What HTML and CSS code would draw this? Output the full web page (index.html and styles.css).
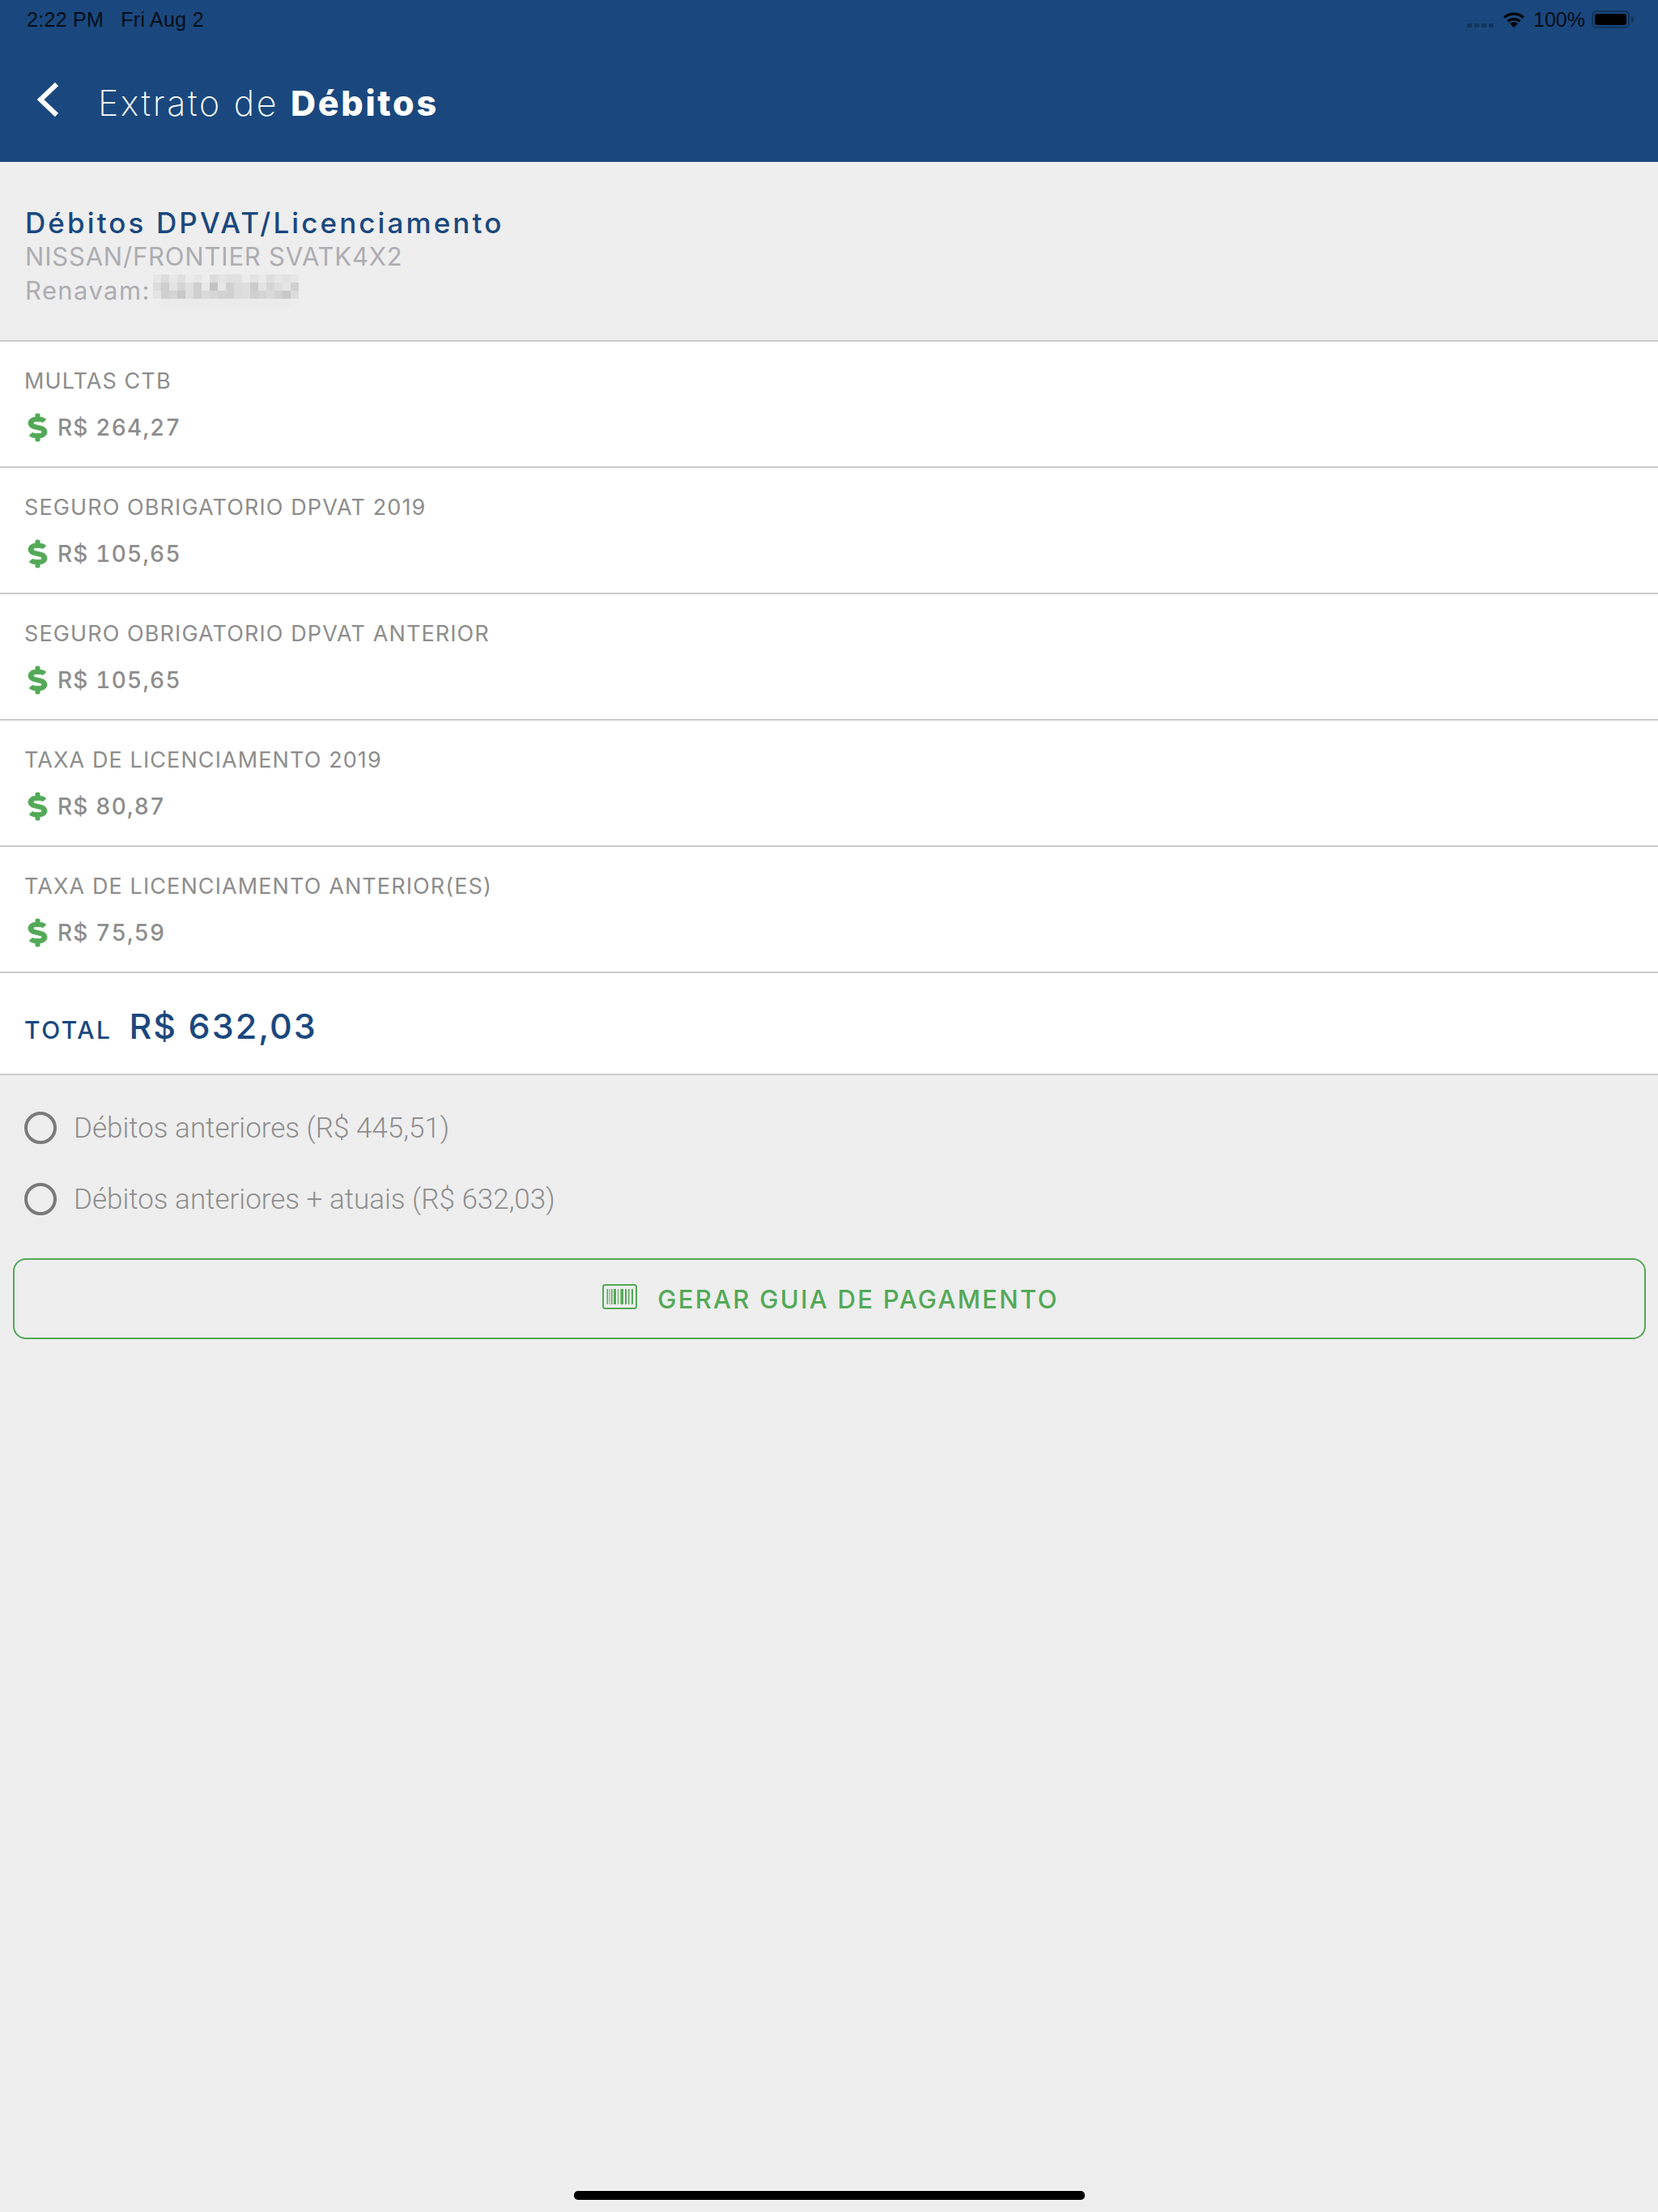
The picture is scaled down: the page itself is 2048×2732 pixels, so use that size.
FILE: index.html
```html
<!DOCTYPE html>
<html lang="pt">
<head>
<meta charset="utf-8">
<title>Extrato de Débitos</title>
<link rel="stylesheet" href="styles.css">
</head>
<body>
<div class="page">
  <header class="header">
    <div class="status">
      <span class="status-time">2:22 PM</span>
      <span class="status-date">Fri Aug 2</span>
      <span class="status-right">
        <svg class="dots" width="34" height="5" viewBox="0 0 34 5"><rect x="0" width="6" height="5" rx="1.5"/><rect x="9" width="6" height="5" rx="1.5"/><rect x="18" width="6" height="5" rx="1.5"/><rect x="27" width="6" height="5" rx="1.5"/></svg>
        <svg class="wifi" width="28" height="20" viewBox="0 0 28 20"><path d="M14 20l-5-5c2.800-2.400 7.200-2.400 10 0z"/><path d="M14 8c3.200 0 6.200 1.100 8.500 3.200l-2.300 2.300c-3.500-3-8.900-3-12.400 0l-2.300-2.300C7.800 9.100 10.800 8 14 8z"/><path d="M14 1.500c4.900 0 9.400 1.800 12.800 5l-2.200 2.300c-5.900-5.500-15.300-5.500-21.200 0L1.200 6.500c3.400-3.200 7.900-5 12.800-5z"/></svg>
        <span class="status-batt">100%</span>
        <span class="battery"><span class="battery-fill"></span></span>
        <span class="battery-tip"></span>
      </span>
    </div>
    <div class="nav">
      <svg class="back" width="28" height="46" viewBox="0 0 28 46"><path d="M26 3L6 22l20 19" fill="none" stroke="#fff" stroke-width="6"/></svg>
      <h1 class="title"><span class="title-light">Extrato de</span> <strong class="title-bold">Débitos</strong></h1>
    </div>
  </header>

  <section class="intro">
    <h2 class="intro-title">Débitos DPVAT/Licenciamento</h2>
    <p class="intro-line">NISSAN/FRONTIER SVATK4X2</p>
    <p class="intro-line intro-renavam">Renavam:
      <svg class="mosaic" width="180" height="40" viewBox="0 0 18 4" shape-rendering="crispEdges">
        <rect x="0" y="0" width="1" height="1" fill="#e6e6e6"/><rect x="1" y="0" width="1" height="1" fill="#dcdcdd"/><rect x="2" y="0" width="1" height="1" fill="#e8e8e8"/><rect x="3" y="0" width="1" height="1" fill="#dfdfdf"/><rect x="4" y="0" width="1" height="1" fill="#ececec"/><rect x="5" y="0" width="1" height="1" fill="#e7e7e7"/><rect x="6" y="0" width="1" height="1" fill="#eeeeee"/><rect x="7" y="0" width="1" height="1" fill="#dcdcdd"/><rect x="8" y="0" width="1" height="1" fill="#e4e4e4"/><rect x="9" y="0" width="1" height="1" fill="#e1e1e1"/><rect x="10" y="0" width="1" height="1" fill="#e0e0e0"/><rect x="11" y="0" width="1" height="1" fill="#ececec"/><rect x="12" y="0" width="1" height="1" fill="#e2e2e2"/><rect x="13" y="0" width="1" height="1" fill="#eaeaea"/><rect x="14" y="0" width="1" height="1" fill="#dedede"/><rect x="15" y="0" width="1" height="1" fill="#e6e6e6"/><rect x="16" y="0" width="1" height="1" fill="#e2e2e2"/><rect x="17" y="0" width="1" height="1" fill="#e7e7e7"/>
        <rect x="0" y="1" width="1" height="1" fill="#dcdcdc"/><rect x="1" y="1" width="1" height="1" fill="#cfcfd0"/><rect x="2" y="1" width="1" height="1" fill="#e4e4e4"/><rect x="3" y="1" width="1" height="1" fill="#d5d5d6"/><rect x="4" y="1" width="1" height="1" fill="#dfdfe0"/><rect x="5" y="1" width="1" height="1" fill="#cfcfd0"/><rect x="6" y="1" width="1" height="1" fill="#e9e9e9"/><rect x="7" y="1" width="1" height="1" fill="#c3c3c5"/><rect x="8" y="1" width="1" height="1" fill="#e7e7e7"/><rect x="9" y="1" width="1" height="1" fill="#d0d0d1"/><rect x="10" y="1" width="1" height="1" fill="#dcdcdd"/><rect x="11" y="1" width="1" height="1" fill="#dedede"/><rect x="12" y="1" width="1" height="1" fill="#cccccd"/><rect x="13" y="1" width="1" height="1" fill="#e4e4e4"/><rect x="14" y="1" width="1" height="1" fill="#d5d5d6"/><rect x="15" y="1" width="1" height="1" fill="#dfdfe0"/><rect x="16" y="1" width="1" height="1" fill="#e6e6e6"/><rect x="17" y="1" width="1" height="1" fill="#d0d0d1"/>
        <rect x="0" y="2" width="1" height="1" fill="#e4e4e4"/><rect x="1" y="2" width="1" height="1" fill="#d0d0d1"/><rect x="2" y="2" width="1" height="1" fill="#d4d4d5"/><rect x="3" y="2" width="1" height="1" fill="#c8c8ca"/><rect x="4" y="2" width="1" height="1" fill="#dedede"/><rect x="5" y="2" width="1" height="1" fill="#cfcfd0"/><rect x="6" y="2" width="1" height="1" fill="#dbdbdb"/><rect x="7" y="2" width="1" height="1" fill="#d6d6d7"/><rect x="8" y="2" width="1" height="1" fill="#d2d2d3"/><rect x="9" y="2" width="1" height="1" fill="#d1d1d2"/><rect x="10" y="2" width="1" height="1" fill="#dcdcdd"/><rect x="11" y="2" width="1" height="1" fill="#dedede"/><rect x="12" y="2" width="1" height="1" fill="#d0d0d1"/><rect x="13" y="2" width="1" height="1" fill="#d4d4d5"/><rect x="14" y="2" width="1" height="1" fill="#dadadb"/><rect x="15" y="2" width="1" height="1" fill="#d2d2d3"/><rect x="16" y="2" width="1" height="1" fill="#c8c8ca"/><rect x="17" y="2" width="1" height="1" fill="#dddddd"/>
        <rect x="1" y="3" width="16" height="1" fill="#ebebeb"/>
      </svg>
    </p>
  </section>

  <ul class="list">
    <li class="row">
      <div class="row-label">MULTAS CTB</div>
      <div class="row-amount"><svg class="dollar" viewBox="0 0 288 512" preserveAspectRatio="none"><use href="#dollar-path"/></svg><span>R$ 264,27</span></div>
    </li>
    <li class="row">
      <div class="row-label">SEGURO OBRIGATORIO DPVAT 2019</div>
      <div class="row-amount"><svg class="dollar" viewBox="0 0 288 512" preserveAspectRatio="none"><use href="#dollar-path"/></svg><span>R$ 105,65</span></div>
    </li>
    <li class="row">
      <div class="row-label">SEGURO OBRIGATORIO DPVAT ANTERIOR</div>
      <div class="row-amount"><svg class="dollar" viewBox="0 0 288 512" preserveAspectRatio="none"><use href="#dollar-path"/></svg><span>R$ 105,65</span></div>
    </li>
    <li class="row">
      <div class="row-label">TAXA DE LICENCIAMENTO 2019</div>
      <div class="row-amount"><svg class="dollar" viewBox="0 0 288 512" preserveAspectRatio="none"><use href="#dollar-path"/></svg><span>R$ 80,87</span></div>
    </li>
    <li class="row">
      <div class="row-label">TAXA DE LICENCIAMENTO ANTERIOR(ES)</div>
      <div class="row-amount"><svg class="dollar" viewBox="0 0 288 512" preserveAspectRatio="none"><use href="#dollar-path"/></svg><span>R$ 75,59</span></div>
    </li>
    <li class="total">
      <span class="total-label">TOTAL</span>
      <span class="total-value">R$ 632,03</span>
    </li>
  </ul>

  <div class="options">
    <label class="option"><span class="radio"></span><span class="option-text">Débitos anteriores (R$ 445,51)</span></label>
    <label class="option"><span class="radio"></span><span class="option-text">Débitos anteriores + atuais (R$ 632,03)</span></label>
  </div>

  <button class="cta" type="button">
    <svg class="barcode" width="43" height="31" viewBox="0 0 43 31">
      <rect x="1" y="1" width="41" height="29" rx="2.500" fill="none" stroke="#53a957" stroke-width="2"/>
      <g fill="#53a957"><rect x="5.500" y="6" width="1.500" height="19"/><rect x="8.500" y="6" width="1" height="19"/><rect x="11" y="6" width="1.500" height="19"/><rect x="14" y="6" width="3" height="19"/><rect x="19" y="6" width="1" height="19"/><rect x="22.500" y="6" width="3.500" height="19"/><rect x="28" y="6" width="2" height="19"/><rect x="32" y="6" width="1.500" height="19"/><rect x="36" y="6" width="2" height="19"/></g>
    </svg>
    <span class="cta-text">GERAR GUIA DE PAGAMENTO</span>
  </button>

  <div class="home"></div>
</div>
<svg class="defs" width="0" height="0"><defs><path id="dollar-path" d="M209.2 233.400l-108-31.600C88.700 198.200 80 186.500 80 173.500c0-16.300 13.200-29.500 29.500-29.500h66.300c12.200 0 24.200 3.700 34.200 10.500 6.100 4.100 14.300 3.100 19.500-2l34.800-34c7.100-6.900 6.100-18.400-1.800-24.500C238 74.800 207.400 64.100 176 64V16c0-8.800-7.200-16-16-16h-32c-8.800 0-16 7.200-16 16v48h-2.500C45.800 64-5.400 118.700.5 183.600c4.200 46.100 39.400 83.600 83.800 96.600l102.500 30c12.500 3.700 21.200 15.300 21.200 28.300 0 16.300-13.200 29.500-29.500 29.500h-66.300C100 368 88 364.300 78 357.500c-6.100-4.100-14.300-3.100-19.500 2l-34.800 34c-7.100 6.900-6.100 18.400 1.800 24.500 24.500 19.200 55.100 29.900 86.500 30v48c0 8.800 7.200 16 16 16h32c8.800 0 16-7.200 16-16v-48.200c46.600-.9 90.300-28.600 105.700-72.700 21.500-61.600-14.600-124.800-72.500-141.700z"/></defs></svg>
</body>
</html>
```

FILE: styles.css
```css
* { box-sizing: border-box; }
html, body { margin: 0; padding: 0; }
body { background: #eeeeee; font-family: "Inter", "Liberation Sans", sans-serif; }
.page { width: 2048px; height: 2732px; display: flex; flex-direction: column; overflow: hidden; }

.header { height: 200px; background: #1a487e; display: flex; flex-direction: column; flex: none; }
.status { height: 48px; display: flex; align-items: center; padding: 0 30px 0 33px; font-family: "Liberation Sans", sans-serif; font-size: 25px; color: #050d18; }
.status-time, .status-date { letter-spacing: 0.3px; }
.status-date { margin-left: 21px; }
.status-right { margin-left: auto; display: flex; align-items: center; }
.dots { fill: #11345c; margin-top: 14px; }
.wifi { fill: #000; margin-left: 10px; }
.status-batt { margin-left: 10px; }
.battery { margin-left: 8px; width: 47px; height: 22px; border: 2px solid #0f3359; border-radius: 6px; padding: 2px; display: flex; }
.battery-fill { flex: 1; background: #000; border-radius: 3px; }
.battery-tip { width: 3px; height: 8px; margin-left: 2px; background: #0f3359; border-radius: 0 3px 3px 0; }

.nav { display: flex; align-items: center; padding-left: 44px; height: 152px; }
.back { flex: none; }
.title { margin: 6px 0 0 49px; font-size: 43px; font-weight: 200; color: #fff; letter-spacing: 2.700px; }
.title-bold { font-weight: 800; }

.intro { height: 220px; padding: 52px 0 0 31px; flex: none; }
.intro-title { margin: 0; font-size: 35px; line-height: 46px; font-weight: 500; color: #1a487e; letter-spacing: 3.100px; }
.intro-line { margin: -2px 0 2px; font-size: 31px; line-height: 42px; font-weight: 400; color: #adadb2; letter-spacing: 0.8px; }
.intro-renavam { display: flex; align-items: center; letter-spacing: 1.400px; }
.mosaic { margin-left: 3px; flex: none; }

.list { list-style: none; margin: 0; padding: 0; flex: none; background: #fff; border-top: 2px solid #cccccc; }
.row { height: 156px; border-bottom: 2px solid #cccccc; padding: 32px 0 0 30px; }
.row-label { font-size: 27px; line-height: 34px; color: #8d8d8d; letter-spacing: 1.100px; }
.row-amount { display: flex; align-items: center; margin-top: 23px; font-size: 28px; line-height: 34px; font-weight: 500; font-variant-numeric: tabular-nums; color: #8d8d8d; letter-spacing: 1.200px; }
.dollar { width: 23px; height: 34px; margin-left: 5px; margin-right: 13px; fill: #53a957; stroke: #53a957; stroke-width: 12px; flex: none; overflow: visible; }
.total { height: 126px; border-bottom: 2px solid #cccccc; display: flex; align-items: baseline; padding: 39px 0 0 30px; color: #1a487e; }
.total-label { font-size: 30px; font-weight: 500; letter-spacing: 2.500px; }
.total-value { font-size: 43px; font-weight: 500; margin-left: 21px; letter-spacing: 2px; }

.options { padding: 21px 0 0 30px; flex: none; }
.option { display: flex; align-items: center; height: 88px; }
.radio { width: 40px; height: 40px; border: 4.500px solid #7a7a7a; border-radius: 50%; flex: none; }
.option-text { margin-left: 21px; font-family: "Roboto", "Liberation Sans", sans-serif; font-weight: 300; font-size: 35px; color: #8e8e8e; }

.cta { margin: 29px 15px 0 16px; height: 100px; flex: none; background: transparent; border: 2px solid #53a957; border-radius: 16px; display: flex; align-items: center; justify-content: center; padding: 0 0 0 3px; font-family: inherit; }
.barcode { flex: none; margin-bottom: 6px; }
.cta-text { margin-left: 25px; font-size: 31px; font-weight: 500; color: #53a957; letter-spacing: 2.300px; }

.home { margin: auto auto 15px; width: 631px; height: 11px; background: #000; border-radius: 5px; flex: none; }
.defs { position: absolute; }
```
